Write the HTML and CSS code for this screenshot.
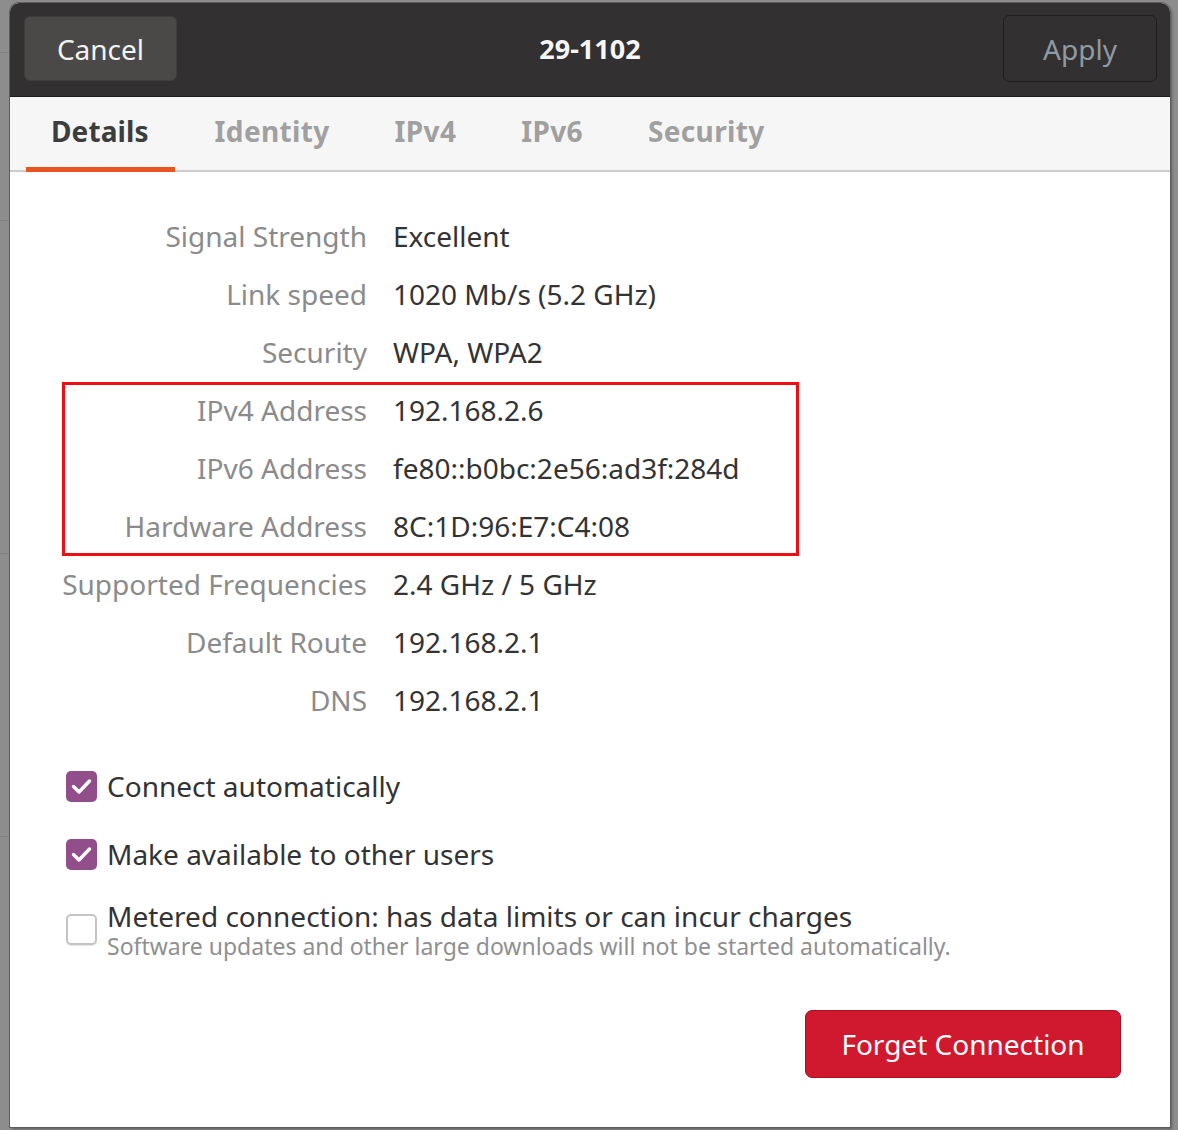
FILE: index.html
```html
<!DOCTYPE html>
<html>
<head>
<meta charset="utf-8">
<link rel="stylesheet" href="styles.css">
</head>
<body>
<div class="backdrop">
  <div class="dialog">
    <header class="headerbar">
      <button class="hb-btn cancel">Cancel</button>
      <div class="title">29-1102</div>
      <button class="hb-btn apply">Apply</button>
    </header>
    <nav class="tabs">
      <div class="tab active">Details</div>
      <div class="tab">Identity</div>
      <div class="tab">IPv4</div>
      <div class="tab">IPv6</div>
      <div class="tab">Security</div>
    </nav>
    <main class="content">
      <div class="details">
        <div class="lbl">Signal Strength</div><div class="val">Excellent</div>
        <div class="lbl">Link speed</div><div class="val">1020 Mb/s (5.2 GHz)</div>
        <div class="lbl">Security</div><div class="val">WPA, WPA2</div>
        <div class="lbl">IPv4 Address</div><div class="val">192.168.2.6</div>
        <div class="lbl">IPv6 Address</div><div class="val">fe80::b0bc:2e56:ad3f:284d</div>
        <div class="lbl">Hardware Address</div><div class="val">8C:1D:96:E7:C4:08</div>
        <div class="lbl">Supported Frequencies</div><div class="val">2.4 GHz / 5 GHz</div>
        <div class="lbl">Default Route</div><div class="val">192.168.2.1</div>
        <div class="lbl">DNS</div><div class="val">192.168.2.1</div>
        <div class="highlight"></div>
      </div>
      <div class="checks">
        <label class="check">
          <span class="box checked"><svg viewBox="0 0 31 31" width="31" height="31"><path d="M7.5 15.5 L13 21 L23.5 10" fill="none" stroke="#fff" stroke-width="3.4" stroke-linecap="round" stroke-linejoin="round"/></svg></span>
          <span class="ctext">Connect automatically</span>
        </label>
        <label class="check">
          <span class="box checked"><svg viewBox="0 0 31 31" width="31" height="31"><path d="M7.5 15.5 L13 21 L23.5 10" fill="none" stroke="#fff" stroke-width="3.4" stroke-linecap="round" stroke-linejoin="round"/></svg></span>
          <span class="ctext">Make available to other users</span>
        </label>
        <label class="check metered">
          <span class="box"></span>
          <span class="ctext-wrap">
            <span class="ctext">Metered connection: has data limits or can incur charges</span>
            <span class="sub">Software updates and other large downloads will not be started automatically.</span>
          </span>
        </label>
      </div>
      <div class="actions">
        <button class="forget">Forget Connection</button>
      </div>
    </main>
  </div>
</div>
</body>
</html>
```

FILE: styles.css
```css
* { box-sizing: border-box; }
html, body { margin: 0; padding: 0; }
body {
  width: 1178px;
  height: 1130px;
  overflow: hidden;
  background: #8d8d8d;
  font-family: "Noto Sans", "Open Sans", sans-serif;
}
.backdrop {
  height: 1130px;
  padding: 3px 8px 0 10px;
  background:
    linear-gradient(#7f7f7f, #7f7f7f) 0 52px / 10px 1px no-repeat,
    linear-gradient(#7f7f7f, #7f7f7f) 0 220px / 10px 1px no-repeat,
    linear-gradient(#7f7f7f, #7f7f7f) 0 553px / 10px 1px no-repeat,
    linear-gradient(#7f7f7f, #7f7f7f) 0 836px / 10px 1px no-repeat,
    #8d8d8d;
}
.dialog {
  width: 1160px;
  height: 1124px;
  background: #ffffff;
  border-radius: 9px 9px 0 0;
  overflow: hidden;
  display: flex;
  flex-direction: column;
  box-shadow: 0 0 0 1px #5e5e5e, 2px 2px 3px rgba(0,0,0,0.35);
}
.headerbar {
  height: 94px;
  flex: none;
  background: #323030;
  border-bottom: 1px solid #1d1c1c;
  display: flex;
  align-items: center;
  justify-content: space-between;
  padding: 0 13px 0 14px;
  position: relative;
}
.hb-btn {
  font-family: inherit;
  font-size: 28px;
  height: 65px;
  border-radius: 6px;
  padding: 0;
  width: 153px;
}
.cancel {
  background: #4a4948;
  color: #f3f3f3;
  border: 1px solid #3e3d3c;
  margin-top: -2px;
}
.apply {
  background: #323030;
  color: #8e9aa4;
  border: 1px solid #1f1e1e;
  width: 154px;
  height: 67px;
  margin-top: -2px;
}
.title {
  position: absolute;
  left: 0; right: 0;
  top: 0;
  line-height: 92px;
  text-align: center;
  color: #f6f6f6;
  font-weight: 700;
  font-size: 27px;
  pointer-events: none;
}
.tabs {
  height: 75px;
  flex: none;
  background: #f6f6f6;
  border-bottom: 2px solid #cdcdcd;
  display: flex;
  gap: 15px;
  padding-left: 16px;
}
.tab {
  padding: 0 25px;
  font-size: 28px;
  font-weight: 700;
  letter-spacing: 0.35px;
  color: #a0a0a0;
  line-height: 68px;
  height: 75px;
  border-bottom: 5px solid transparent;
}
.tab.active {
  color: #3d3d3d;
  letter-spacing: 0.1px;
  padding-right: 26px;
  border-bottom: 5px solid #e95420;
}
.content {
  flex: 1;
  display: flex;
  flex-direction: column;
  padding-top: 35px;
}
.details {
  display: grid;
  grid-template-columns: 357px auto;
  column-gap: 26px;
  position: relative;
  font-size: 28px;
}
.lbl, .val {
  height: 58px;
  line-height: 58px;
  white-space: nowrap;
}
.lbl { text-align: right; color: #8b8b8b; }
.val { color: #333333; }
.highlight {
  position: absolute;
  left: 52px;
  top: 175px;
  width: 737px;
  height: 174px;
  border: 3px solid #ee0f14;
}
.checks {
  margin-top: 23px;
  padding-left: 56px;
  display: flex;
  flex-direction: column;
}
.check {
  display: flex;
  align-items: center;
  gap: 10px;
  height: 68px;
  font-size: 28px;
  color: #333333;
}
.box {
  width: 31px;
  height: 31px;
  border-radius: 5px;
  flex: none;
  display: block;
}
.box.checked { background: #924d8b; }
.box svg { display: block; }
.metered {
  height: auto;
  margin-top: 12px;
  align-items: flex-start;
}
.metered .box {
  border: 2px solid #c4c4c4;
  background: #fff;
  margin-top: 14px;
  box-shadow: 0 1px 0 #e6e6e6;
}
.ctext-wrap { display: flex; flex-direction: column; }
.metered .ctext { line-height: 32px; }
.sub {
  font-size: 23px;
  color: #909090;
  line-height: 28px;
}
.actions {
  display: flex;
  justify-content: flex-end;
  padding-right: 49px;
  margin-top: 50px;
}
.forget {
  font-family: inherit;
  font-size: 28px;
  color: #ffffff;
  background: #d0192f;
  border: 1px solid #a8101f;
  border-radius: 7px;
  width: 316px;
  height: 68px;
  padding: 0;
}
```
